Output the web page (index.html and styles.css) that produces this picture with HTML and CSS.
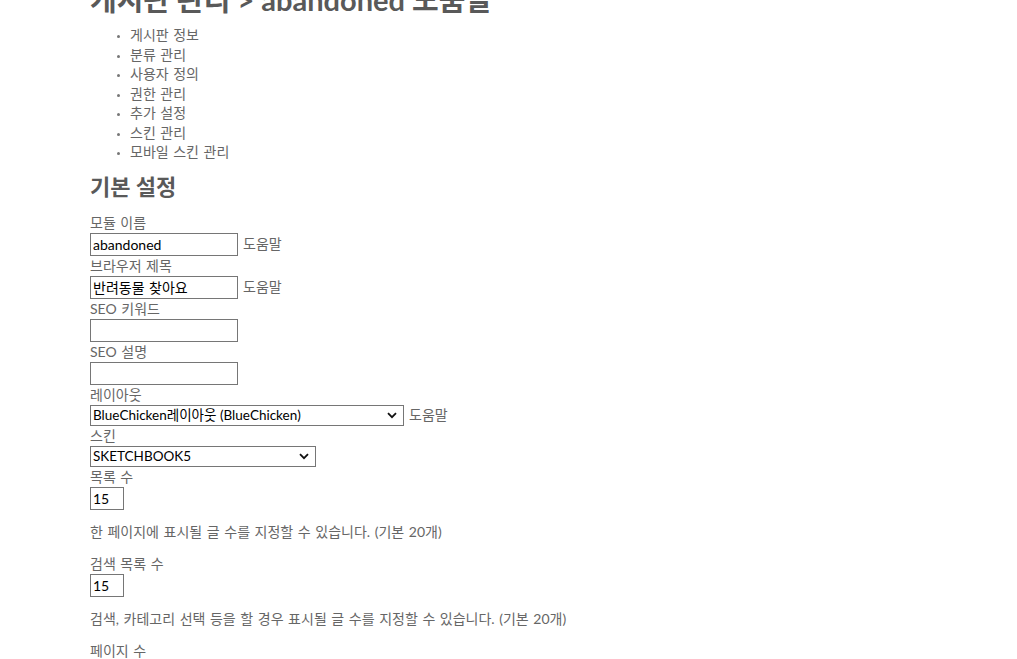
FILE: index.html
```html
<!DOCTYPE html>
<html lang="ko">
<head>
<meta charset="utf-8">
<title>게시판 관리</title>
<link rel="stylesheet" href="styles.css">
</head>
<body>
<div class="page">
  <h1 class="title">게시판 관리 &gt; abandoned 도움말</h1>
  <ul class="tabs">
    <li>게시판 정보</li>
    <li>분류 관리</li>
    <li>사용자 정의</li>
    <li>권한 관리</li>
    <li>추가 설정</li>
    <li>스킨 관리</li>
    <li>모바일 스킨 관리</li>
  </ul>
  <h2 class="section">기본 설정</h2>
  <form class="form">
    <div class="field">
      <label class="label">모듈 이름</label>
      <div class="row">
        <input class="text" type="text" value="abandoned">
        <span class="help">도움말</span>
      </div>
    </div>
    <div class="field">
      <label class="label">브라우저 제목</label>
      <div class="row">
        <input class="text" type="text" value="반려동물 찾아요">
        <span class="help">도움말</span>
      </div>
    </div>
    <div class="field">
      <label class="label">SEO 키워드</label>
      <div class="row">
        <input class="text" type="text" value="">
      </div>
    </div>
    <div class="field">
      <label class="label">SEO 설명</label>
      <div class="row">
        <input class="text" type="text" value="">
      </div>
    </div>
    <div class="field">
      <label class="label">레이아웃</label>
      <div class="row">
        <div class="select select-wide">
          <select><option>BlueChicken레이아웃 (BlueChicken)</option></select>
          <svg class="chev" width="10" height="7" viewBox="0 0 10 7"><path d="M1 1.2 L5 5.2 L9 1.2" fill="none" stroke="#111" stroke-width="1.8"/></svg>
        </div>
        <span class="help">도움말</span>
      </div>
    </div>
    <div class="field">
      <label class="label">스킨</label>
      <div class="row">
        <div class="select select-mid">
          <select><option>SKETCHBOOK5</option></select>
          <svg class="chev" width="10" height="7" viewBox="0 0 10 7"><path d="M1 1.2 L5 5.2 L9 1.2" fill="none" stroke="#111" stroke-width="1.8"/></svg>
        </div>
      </div>
    </div>
    <div class="field">
      <label class="label">목록 수</label>
      <div class="row">
        <input class="text small" type="text" value="15">
      </div>
      <p class="desc">한 페이지에 표시될 글 수를 지정할 수 있습니다. (기본 20개)</p>
    </div>
    <div class="field">
      <label class="label">검색 목록 수</label>
      <div class="row">
        <input class="text small" type="text" value="15">
      </div>
      <p class="desc">검색, 카테고리 선택 등을 할 경우 표시될 글 수를 지정할 수 있습니다. (기본 20개)</p>
    </div>
    <div class="field">
      <label class="label">페이지 수</label>
    </div>
  </form>
</div>
</body>
</html>
```

FILE: styles.css
```css
html, body {
  margin: 0;
  padding: 0;
  background: #fff;
}

body {
  font-family: "Lato", "Noto Sans CJK KR", sans-serif;
  font-size: 14px;
  line-height: 20px;
  word-spacing: 1px;
  color: #666;
  overflow: hidden;
}

.page {
  padding-left: 90px;
}

.title {
  margin: -17px 0 8px;
  font-size: 29px;
  line-height: 34px;
  font-weight: bold;
  word-spacing: 0;
  color: #595959;
}

.tabs {
  margin: 0 0 12px;
  padding-left: 40px;
  list-style: disc;
  line-height: 19.5px;
}

.tabs li::marker {
  font-size: 9px;
  color: #777;
}

.section {
  margin: 0 0 13px;
  font-size: 22px;
  line-height: 26px;
  font-weight: bold;
  word-spacing: 0;
  color: #595959;
}

.form {
  margin: 0;
}

.label {
  display: block;
}

.row {
  display: flex;
  align-items: center;
  gap: 5px;
}

.text {
  box-sizing: border-box;
  width: 148px;
  height: 23px;
  margin: 0;
  padding: 0 2px;
  border: 1px solid #767676;
  border-radius: 0;
  font-family: "Lato", "Noto Sans CJK KR", sans-serif;
  font-size: 14px;
  word-spacing: 1px;
  color: #000;
  background: #fff;
  outline: none;
}

.text.small {
  width: 34px;
}

.select {
  box-sizing: border-box;
  display: flex;
  align-items: center;
  height: 21px;
  border: 1px solid #767676;
  background: #fff;
}

.select-wide {
  width: 314px;
}

.select-mid {
  width: 226px;
}

.select select {
  flex: 1;
  min-width: 0;
  height: 100%;
  margin: 0;
  padding: 0 0 0 2px;
  border: 0;
  background: transparent;
  appearance: none;
  -webkit-appearance: none;
  font-family: "Lato", "Noto Sans CJK KR", sans-serif;
  font-size: 13.5px;
  color: #000;
  outline: none;
}

.chev {
  flex: none;
  margin-right: 6px;
}

.desc {
  margin: 12px 0;
}
```
